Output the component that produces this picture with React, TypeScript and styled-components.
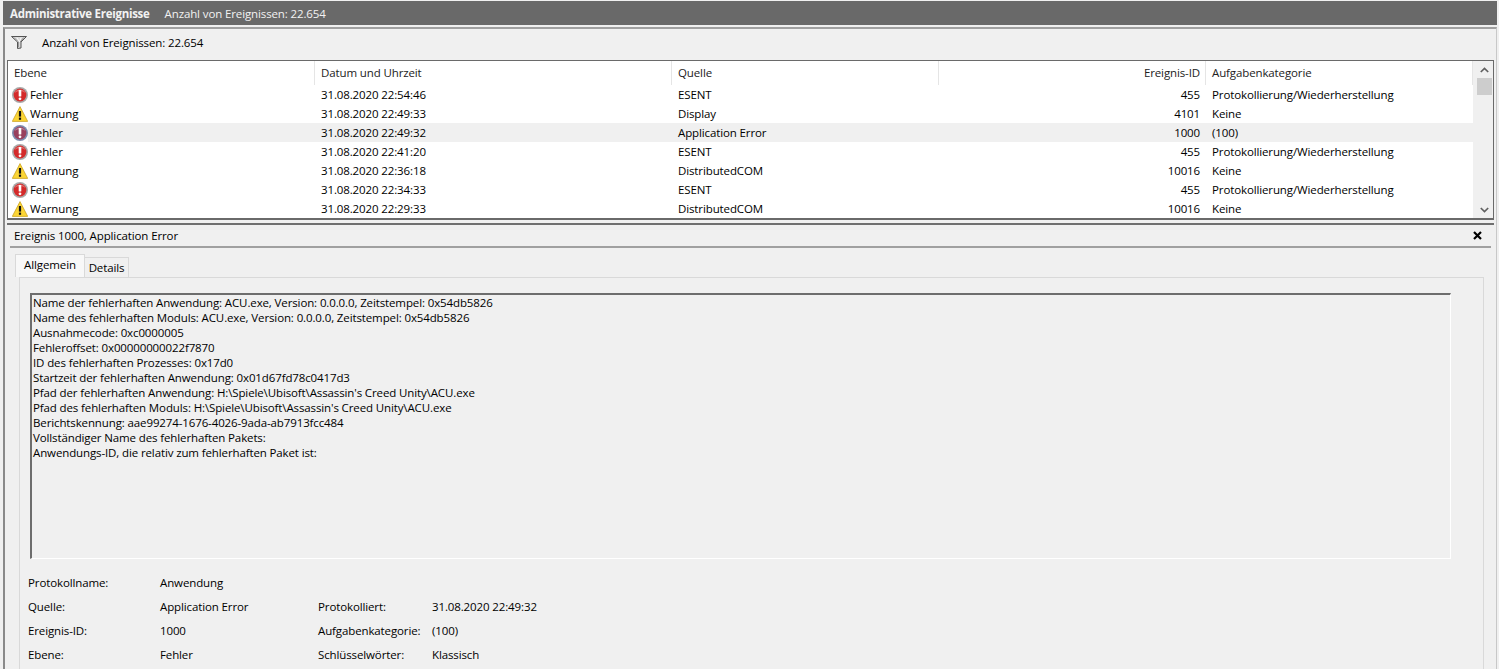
import styled, { createGlobalStyle } from "styled-components";

const GlobalStyle = createGlobalStyle`
    html, body {
        margin: 0;
        padding: 0;
        height: 100%;
        overflow: hidden;
        background: #f0f0f0;
    }
    body {
        font-family: "Open Sans", "Noto Sans", sans-serif;
        font-size: 11.5px;
        letter-spacing: -0.12px;
        color: #000;
    }
`;

const COLUMNS = "307px 357px 267px 267px 267px";

const Page = styled.div`
    width: 1499px;
    height: 669px;
    overflow: hidden;
    padding: 1px 2px 0 3px;
    box-sizing: border-box;
    background: #f0f0f0;
`;

const TitleBar = styled.div`
    height: 24px;
    background: #696969;
    display: flex;
    align-items: center;
    padding-left: 7px;
    gap: 15px;
    color: #f2f2f2;
`;

const TitleStrong = styled.span`
    font-weight: 700;
    letter-spacing: -0.28px;
`;

const Frame = styled.div`
    margin-top: 2px;
    border-left: 2px solid #8a8a8a;
    border-top: 2px solid #a0a0a0;
    border-right: 1px solid #c8c8c8;
    padding: 0 2px;
`;

const FilterBar = styled.div`
    height: 31px;
    display: flex;
    align-items: center;
    gap: 15px;
    padding: 0 0 5px 4px;
    box-sizing: border-box;
`;

const ListFrame = styled.div`
    height: 160px;
    border: 1px solid #6a6a6a;
    border-width: 1px 1px 2px 1px;
    background: #fff;
    display: flex;
    overflow: hidden;
    box-sizing: border-box;
`;

const ListBody = styled.div`
    width: 1465px;
`;

const HeaderRow = styled.div`
    display: grid;
    grid-template-columns: ${COLUMNS};
    height: 24px;
`;

const HeaderCell = styled.div<{ $right?: boolean }>`
    display: flex;
    align-items: center;
    justify-content: ${(p) => (p.$right ? "flex-end" : "flex-start")};
    padding: 0 ${(p) => (p.$right ? "5px" : "0")} 2px ${(p) => (p.$right ? "0" : "6px")};
    border-right: 1px solid #e5e5e5;
    color: #222;
`;

const Row = styled.div<{ $selected?: boolean }>`
    display: grid;
    grid-template-columns: ${COLUMNS};
    height: 19px;
    align-items: center;
    background: ${(p) =>
        p.$selected ? "linear-gradient(to right, #fff 20px, #f0f0f0 20px)" : "transparent"};
`;

const LevelCell = styled.div`
    display: flex;
    align-items: center;
    gap: 2px;
    padding-left: 4px;
`;

const Cell = styled.div<{ $right?: boolean }>`
    padding: 0 ${(p) => (p.$right ? "6px" : "0")} 0 ${(p) => (p.$right ? "0" : "6px")};
    text-align: ${(p) => (p.$right ? "right" : "left")};
`;

const Scrollbar = styled.div`
    width: 20px;
    flex: none;
    background: #f0f0f0;
    display: flex;
    flex-direction: column;
    align-items: center;
    padding: 6px 0 5px 3px;
    box-sizing: border-box;
`;

const Thumb = styled.div`
    width: 15px;
    height: 17px;
    background: #cdcdcd;
    margin-top: 5px;
`;

const Spacer = styled.div`
    flex: 1;
`;

const Detail = styled.div`
    margin-top: 3px;
    border-top: 2px solid #6f6f6f;
`;

const DetailHeader = styled.div`
    height: 21px;
    margin: 0 3px;
    border-bottom: 2px solid #a0a0a0;
    display: flex;
    align-items: center;
    justify-content: space-between;
    padding: 0 9px 0 4px;
`;

const Tabs = styled.div`
    display: flex;
    align-items: flex-end;
    height: 29px;
    padding-left: 8px;
`;

const Tab = styled.div<{ $active?: boolean }>`
    height: ${(p) => (p.$active ? "23px" : "20px")};
    width: ${(p) => (p.$active ? "70px" : "44px")};
    display: flex;
    align-items: center;
    justify-content: center;
    box-sizing: border-box;
    padding-bottom: ${(p) => (p.$active ? "3px" : "1px")};
    border: 1px solid #d9d9d9;
    border-bottom: none;
    border-left-width: ${(p) => (p.$active ? "1px" : "0")};
    background: ${(p) => (p.$active ? "#f8f8f8" : "#f0f0f0")};
`;

const TabBody = styled.div`
    margin-left: 12px;
    width: 1465px;
    height: 400px;
    box-sizing: border-box;
    border: 1px solid #d9d9d9;
    padding: 15px 0 0 10px;
`;

const MessageBox = styled.div`
    width: 1421px;
    height: 266px;
    box-sizing: border-box;
    border-top: 2px solid #6d6d6d;
    border-left: 2px solid #6d6d6d;
    border-right: 1px solid #fff;
    border-bottom: 1px solid #fff;
    padding: 0 0 0 1px;
`;

const MessageLine = styled.div`
    height: 15px;
    white-space: nowrap;
    line-height: 15px;
`;

const Meta = styled.div`
    display: grid;
    grid-template-columns: 132px 158px 114px 300px;
    grid-auto-rows: 24px;
    align-items: center;
    margin: 11px 0 0 -2px;
`;

const ErrorIcon = ({ selected }: { selected?: boolean }) => (
    <svg width="16" height="16" viewBox="0 0 16 16" style={{ flex: "none" }}>
        <circle cx="8" cy="8" r="8" fill={selected ? "#7d8db0" : "#a9a9a9"} />
        <circle cx="8" cy="8" r="6.4" fill={selected ? "#98405e" : "#d42a2a"} />
        <path d="M2.5 6a5.8 5.2 0 0 1 11 0a9 9 0 0 0-11 0z" fill="#fff" opacity=".3" />
        <rect x="6.7" y="3" width="2.6" height="6.6" rx=".6" fill="#fff" />
        <circle cx="8" cy="11.8" r="1.4" fill="#fff" />
    </svg>
);

const WarningIcon = () => (
    <svg width="16" height="16" viewBox="0 0 16 16" style={{ flex: "none" }}>
        <path d="M8 .6 15.7 15.4H.3z" fill="#fbd535" stroke="#c9a227" strokeWidth=".8" strokeLinejoin="round" />
        <rect x="6.9" y="5" width="2.2" height="5.6" fill="#111" />
        <rect x="6.9" y="11.6" width="2.2" height="2.2" fill="#111" />
    </svg>
);

const FilterIcon = () => (
    <svg width="16" height="13" viewBox="0 0 16 13">
        <path d="M.5.5h15L10 6v6L6.5 12.5V6z" fill="#d8d8d8" stroke="#555" strokeWidth="1" strokeLinejoin="round" />
        <path d="M3 1.5 7.5 6v5" fill="none" stroke="#999" strokeWidth="1" />
        <path d="M6 1.5 8.5 6M10 1.5 8.5 6" fill="none" stroke="#fff" strokeWidth=".8" />
        <path d="M12.8 1.5 9.2 6" fill="none" stroke="#888" strokeWidth="1" />
    </svg>
);

const Chevron = ({ up }: { up?: boolean }) => (
    <svg width="9" height="6" viewBox="0 0 9 6" style={{ flex: "none" }}>
        <path d={up ? "M.8 5 4.5 1.5 8.2 5" : "M.8 1 4.5 4.5 8.2 1"} fill="none" stroke="#606060" strokeWidth="1.7" />
    </svg>
);

const CloseIcon = () => (
    <svg width="9" height="9" viewBox="0 0 9 9">
        <path d="M1 1 8 8M8 1 1 8" stroke="#000" strokeWidth="2.2" />
    </svg>
);

type EventRow = {
    level: "Fehler" | "Warnung";
    date: string;
    source: string;
    id: string;
    category: string;
    selected?: boolean;
};

const events: EventRow[] = [
    { level: "Fehler", date: "31.08.2020 22:54:46", source: "ESENT", id: "455", category: "Protokollierung/Wiederherstellung" },
    { level: "Warnung", date: "31.08.2020 22:49:33", source: "Display", id: "4101", category: "Keine" },
    { level: "Fehler", date: "31.08.2020 22:49:32", source: "Application Error", id: "1000", category: "(100)", selected: true },
    { level: "Fehler", date: "31.08.2020 22:41:20", source: "ESENT", id: "455", category: "Protokollierung/Wiederherstellung" },
    { level: "Warnung", date: "31.08.2020 22:36:18", source: "DistributedCOM", id: "10016", category: "Keine" },
    { level: "Fehler", date: "31.08.2020 22:34:33", source: "ESENT", id: "455", category: "Protokollierung/Wiederherstellung" },
    { level: "Warnung", date: "31.08.2020 22:29:33", source: "DistributedCOM", id: "10016", category: "Keine" },
];

const message = [
    "Name der fehlerhaften Anwendung: ACU.exe, Version: 0.0.0.0, Zeitstempel: 0x54db5826",
    "Name des fehlerhaften Moduls: ACU.exe, Version: 0.0.0.0, Zeitstempel: 0x54db5826",
    "Ausnahmecode: 0xc0000005",
    "Fehleroffset: 0x00000000022f7870",
    "ID des fehlerhaften Prozesses: 0x17d0",
    "Startzeit der fehlerhaften Anwendung: 0x01d67fd78c0417d3",
    "Pfad der fehlerhaften Anwendung: H:\\Spiele\\Ubisoft\\Assassin's Creed Unity\\ACU.exe",
    "Pfad des fehlerhaften Moduls: H:\\Spiele\\Ubisoft\\Assassin's Creed Unity\\ACU.exe",
    "Berichtskennung: aae99274-1676-4026-9ada-ab7913fcc484",
    "Vollständiger Name des fehlerhaften Pakets:",
    "Anwendungs-ID, die relativ zum fehlerhaften Paket ist:",
];

const meta = [
    ["Protokollname:", "Anwendung", "", ""],
    ["Quelle:", "Application Error", "Protokolliert:", "31.08.2020 22:49:32"],
    ["Ereignis-ID:", "1000", "Aufgabenkategorie:", "(100)"],
    ["Ebene:", "Fehler", "Schlüsselwörter:", "Klassisch"],
];

const App = () => {
    return (
        <Page>
            <GlobalStyle />
            <TitleBar>
                <TitleStrong>Administrative Ereignisse</TitleStrong>
                <span>Anzahl von Ereignissen: 22.654</span>
            </TitleBar>
            <Frame>
                <FilterBar>
                    <FilterIcon />
                    <span>Anzahl von Ereignissen: 22.654</span>
                </FilterBar>
                <ListFrame>
                    <ListBody>
                        <HeaderRow>
                            <HeaderCell>Ebene</HeaderCell>
                            <HeaderCell>Datum und Uhrzeit</HeaderCell>
                            <HeaderCell>Quelle</HeaderCell>
                            <HeaderCell $right>Ereignis-ID</HeaderCell>
                            <HeaderCell>Aufgabenkategorie</HeaderCell>
                        </HeaderRow>
                        {events.map((e) => (
                            <Row key={e.date} $selected={e.selected}>
                                <LevelCell>
                                    {e.level === "Fehler" ? <ErrorIcon selected={e.selected} /> : <WarningIcon />}
                                    {e.level}
                                </LevelCell>
                                <Cell>{e.date}</Cell>
                                <Cell>{e.source}</Cell>
                                <Cell $right>{e.id}</Cell>
                                <Cell>{e.category}</Cell>
                            </Row>
                        ))}
                    </ListBody>
                    <Scrollbar>
                        <Chevron up />
                        <Thumb />
                        <Spacer />
                        <Chevron />
                    </Scrollbar>
                </ListFrame>
                <Detail>
                    <DetailHeader>
                        <span>Ereignis 1000, Application Error</span>
                        <CloseIcon />
                    </DetailHeader>
                    <Tabs>
                        <Tab $active>Allgemein</Tab>
                        <Tab>Details</Tab>
                    </Tabs>
                    <TabBody>
                        <MessageBox>
                            {message.map((line) => (
                                <MessageLine key={line}>{line}</MessageLine>
                            ))}
                        </MessageBox>
                        <Meta>
                            {meta.flat().map((value, i) => (
                                <span key={i}>{value}</span>
                            ))}
                        </Meta>
                    </TabBody>
                </Detail>
            </Frame>
        </Page>
    );
};

export default App;
